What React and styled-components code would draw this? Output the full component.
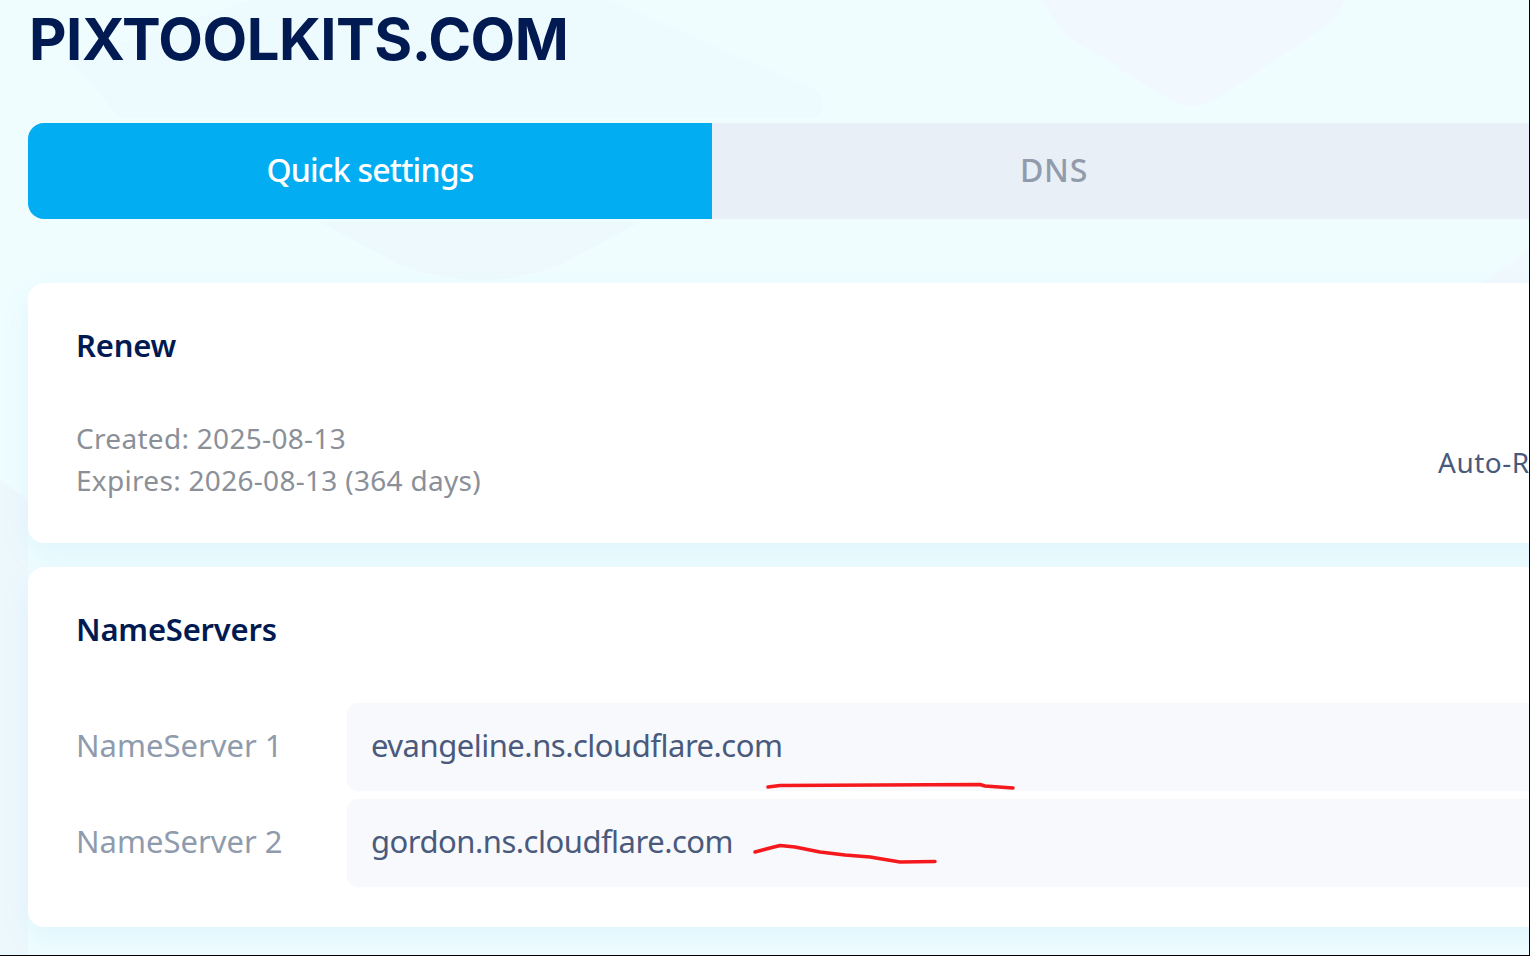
import React from "react";
import styled, { createGlobalStyle } from "styled-components";

const Global = createGlobalStyle`
  html, body { margin: 0; padding: 0; background: #000; }
  * { box-sizing: border-box; }
`;

const Frame = styled.div`
  position: relative;
  width: 1529px;
  height: 955px;
  overflow: hidden;
  background: #effdff;
  font-family: "Noto Sans", "Open Sans", sans-serif;
`;

const Backdrop = styled.svg`
  position: absolute;
  inset: 0;
  width: 1529px;
  height: 955px;
`;

const Ink = styled.svg`
  position: absolute;
  inset: 0;
  width: 1529px;
  height: 955px;
  pointer-events: none;
`;

const Content = styled.main`
  position: relative;
  width: 2100px;
  padding: 0 0 0 28px;
`;

const Title = styled.h1`
  margin: 0;
  height: 123px;
  padding: 9px 0 0 1px;
  font-family: Inter, "Liberation Sans", sans-serif;
  font-size: 58px;
  line-height: 60px;
  font-weight: 700;
  letter-spacing: -0.48px;
  color: #011a52;
`;

const Tabs = styled.div`
  display: flex;
  width: 2052px;
  height: 96px;
  margin-bottom: 64px;
  border-radius: 16px;
  overflow: hidden;
  background: #e8eff7;
`;

const Tab = styled.div`
  flex: 0 0 684px;
  display: flex;
  align-items: center;
  justify-content: center;
  padding-bottom: 4px;
  font-size: 32px;
  font-weight: 500;
  letter-spacing: ${(p) => (p.$active ? "-0.8px" : "0.8px")};
  color: ${(p) => (p.$active ? "#ffffff" : "#929bac")};
  background: ${(p) => (p.$active ? "#02adf2" : "transparent")};
`;

const Card = styled.section`
  width: 2052px;
  height: ${(p) => p.$height}px;
  margin-bottom: 24px;
  padding: 0 48px 0 49px;
  background: #ffffff;
  border-radius: 16px;
  box-shadow: 0 12px 30px rgba(60, 150, 225, 0.08);
`;

const CardTitle = styled.h2`
  margin: 0 0 0 -1px;
  height: ${(p) => p.$height}px;
  padding-top: 42px;
  font-size: 31px;
  line-height: 40px;
  font-weight: 600;
  letter-spacing: -0.2px;
  color: #011a52;
`;

const RenewRow = styled.div`
  display: flex;
  align-items: flex-start;
  height: 84px;
  margin-left: -1px;
  gap: 957px;
`;

const Meta = styled.div`
  flex: 0 0 403px;
  font-size: 28px;
  line-height: 42px;
  letter-spacing: 0.3px;
  white-space: nowrap;
  color: #8b8f98;
`;

const AutoRenew = styled.div`
  padding-top: 24px;
  font-size: 28px;
  line-height: 42px;
  letter-spacing: 0.5px;
  white-space: nowrap;
  color: #4a5a7c;
`;

const ServerRow = styled.div`
  display: flex;
  align-items: center;
  height: 88px;
  margin-bottom: 8px;
`;

const ServerLabel = styled.div`
  flex: 0 0 270px;
  margin: 0 1px 0 -1px;
  padding-bottom: 4px;
  font-size: 31px;
  letter-spacing: 0;
  color: #8f9bac;
`;

const ServerValue = styled.div`
  flex: 1;
  height: 88px;
  display: flex;
  align-items: center;
  padding: 0 0 4px 24px;
  border-radius: 10px;
  background: #f7f9fc;
  font-size: 31px;
  letter-spacing: -0.5px;
  color: #4a5a7c;
`;

export default function App() {
  return (
    <>
      <Global />
      <Frame>
        <Backdrop viewBox="0 0 1529 955" aria-hidden="true">
          <path d="M1040 0 L1065 35 L1170 100 Q1192 112 1215 100 L1335 20 L1345 0 Z" fill="#f2f9fe" />
          <path d="M70 60 L250 0 L610 0 L815 90 Q832 105 815 118 L120 118 Z" fill="#eefbfe" />
          <path d="M320 222 L640 222 L560 265 Q480 295 400 265 Z" fill="#edf9fd" />
          <path d="M1480 283 L1529 250 L1529 283 Z" fill="#f0f9fe" />
          <path d="M0 480 L28 500 L28 955 L0 955 Z" fill="#edf8fd" />
        </Backdrop>
        <Content>
          <Title>PIXTOOLKITS.COM</Title>
          <Tabs>
            <Tab $active>Quick settings</Tab>
            <Tab>DNS</Tab>
          </Tabs>
          <Card $height={260}>
            <CardTitle $height={134}>Renew</CardTitle>
            <RenewRow>
              <Meta>
                Created: 2025-08-13
                <br />
                Expires: 2026-08-13 (364 days)
              </Meta>
              <AutoRenew>Auto-Renew</AutoRenew>
            </RenewRow>
          </Card>
          <Card $height={360}>
            <CardTitle $height={136}>NameServers</CardTitle>
            <ServerRow>
              <ServerLabel>NameServer 1</ServerLabel>
              <ServerValue>evangeline.ns.cloudflare.com</ServerValue>
            </ServerRow>
            <ServerRow>
              <ServerLabel>NameServer 2</ServerLabel>
              <ServerValue>gordon.ns.cloudflare.com</ServerValue>
            </ServerRow>
          </Card>
        </Content>
        <Ink viewBox="0 0 1529 955" aria-hidden="true">
          <path d="M768 787 L780 785.5 L980 784.5 L985 786 L1013 788" fill="none" stroke="#f5181c" strokeWidth="3.5" strokeLinecap="round" strokeLinejoin="round" />
          <path d="M755 852 L770 848 L780 845.5 L795 847 L820 852 L845 855 L870 857 L900 862 L935 861.5" fill="none" stroke="#f5181c" strokeWidth="3.5" strokeLinecap="round" strokeLinejoin="round" />
        </Ink>
      </Frame>
    </>
  );
}
